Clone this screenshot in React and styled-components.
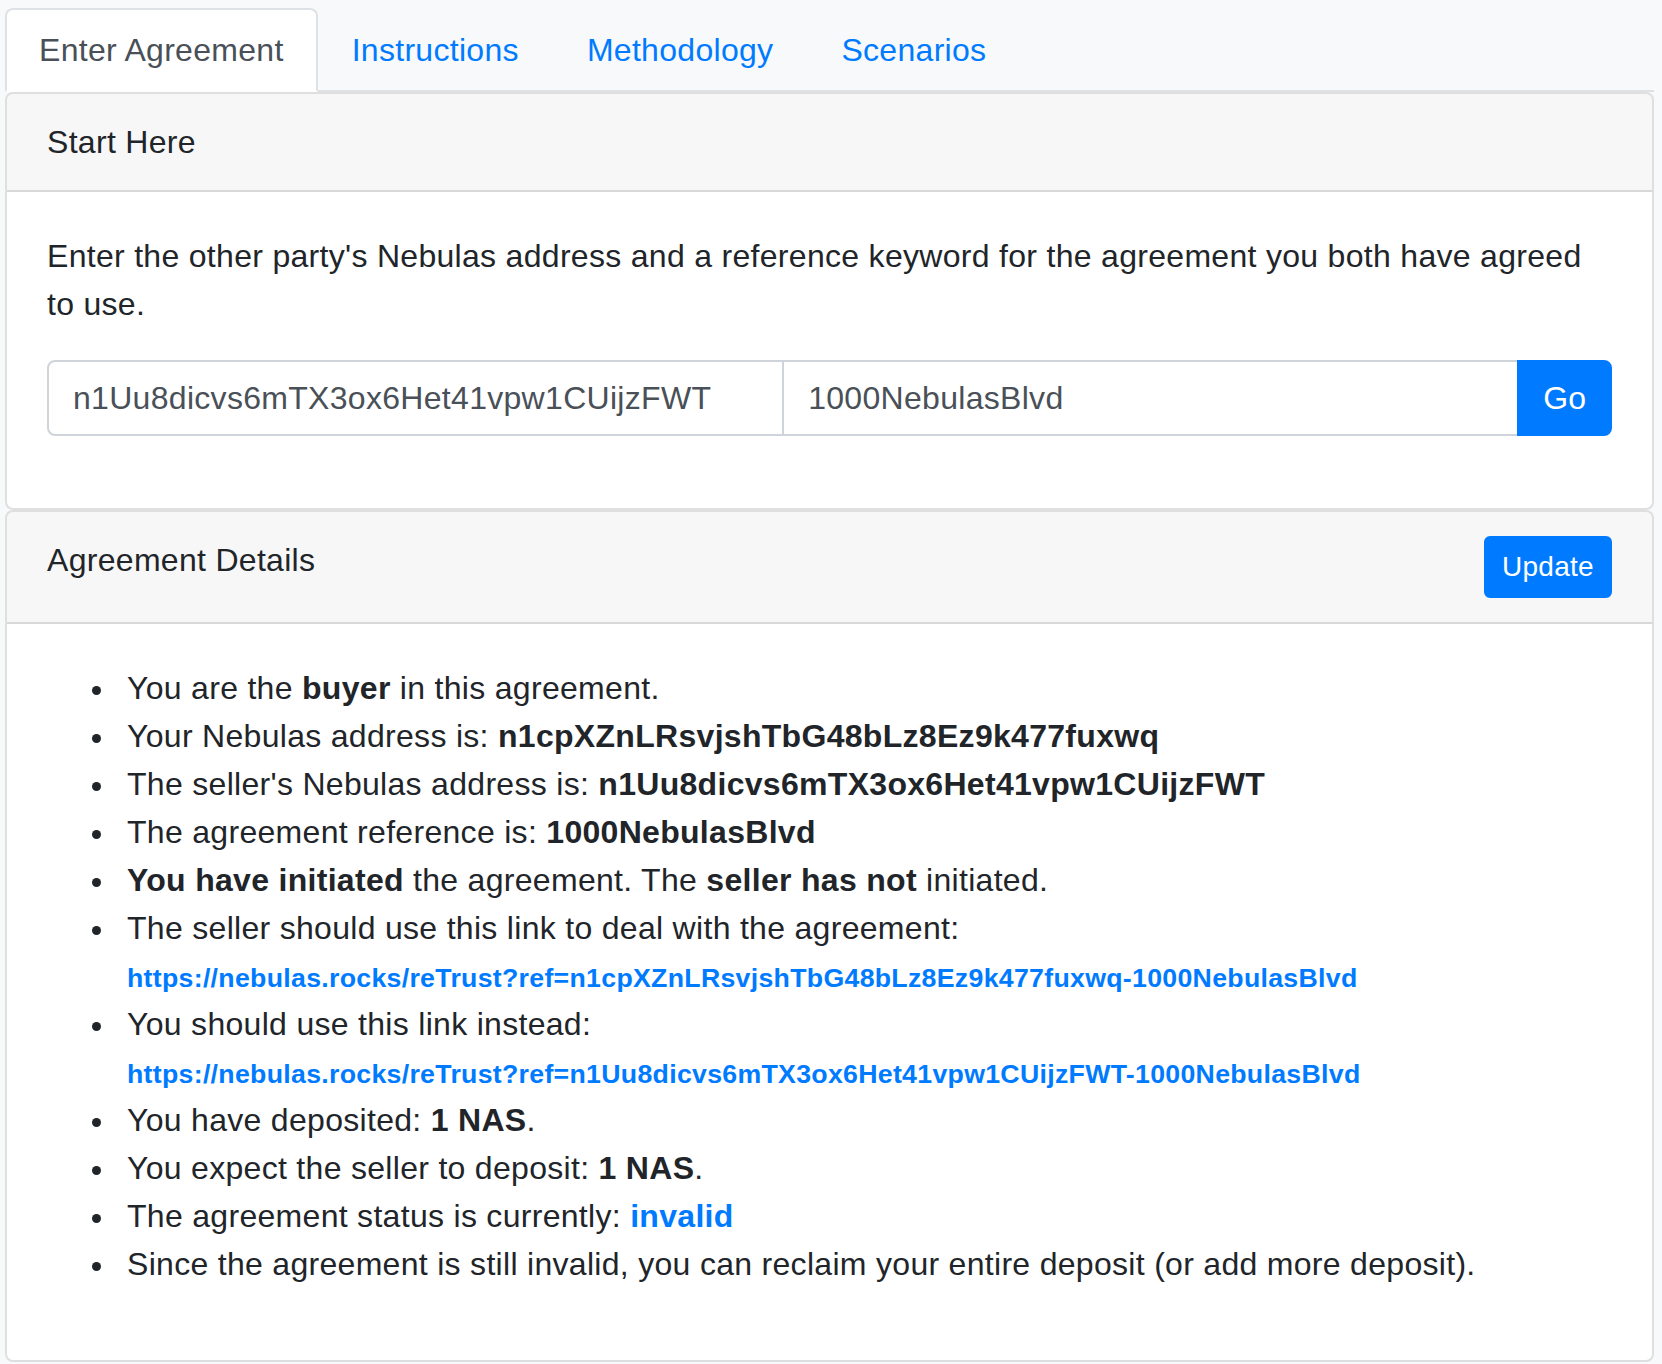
import React, { useState } from "react";
import styled, { createGlobalStyle } from "styled-components";

const GlobalStyle = createGlobalStyle`
  html, body {
    margin: 0;
    background: #f8f9fa;
  }
  * {
    box-sizing: border-box;
  }
`;

const tabs = ["Enter Agreement", "Instructions", "Methodology", "Scenarios"];

const sellerAddress = "n1Uu8dicvs6mTX3ox6Het41vpw1CUijzFWT";
const buyerAddress = "n1cpXZnLRsvjshTbG48bLz8Ez9k477fuxwq";
const reference = "1000NebulasBlvd";

function App() {
  const [active, setActive] = useState(0);
  const [address, setAddress] = useState(sellerAddress);
  const [keyword, setKeyword] = useState(reference);

  return (
    <Page>
      <GlobalStyle />
      <TabBar>
        {tabs.map((t, i) => (
          <Tab key={t} active={i === active} onClick={() => setActive(i)}>
            {t}
          </Tab>
        ))}
      </TabBar>

      <Card>
        <CardHeader>Start Here</CardHeader>
        <CardBody>
          <Lead>
            Enter the other party's Nebulas address and a reference keyword for
            the agreement you both have agreed to use.
          </Lead>
          <InputGroup>
            <Field
              value={address}
              onChange={(e) => setAddress(e.target.value)}
            />
            <Field
              value={keyword}
              onChange={(e) => setKeyword(e.target.value)}
            />
            <GoButton>Go</GoButton>
          </InputGroup>
        </CardBody>
      </Card>

      <Card>
        <CardHeader split>
          <span>Agreement Details</span>
          <SmallButton>Update</SmallButton>
        </CardHeader>
        <CardBody>
          <Details>
            <li>
              You are the <b>buyer</b> in this agreement.
            </li>
            <li>
              Your Nebulas address is: <b>{buyerAddress}</b>
            </li>
            <li>
              The seller's Nebulas address is: <b>{sellerAddress}</b>
            </li>
            <li>
              The agreement reference is: <b>{reference}</b>
            </li>
            <li>
              <b>You have initiated</b> the agreement. The{" "}
              <b>seller has not</b> initiated.
            </li>
            <li>
              The seller should use this link to deal with the agreement:
              <br />
              <LinkLine href="#">
                https://nebulas.rocks/reTrust?ref={buyerAddress}-{reference}
              </LinkLine>
            </li>
            <li>
              You should use this link instead:
              <br />
              <LinkLine href="#">
                https://nebulas.rocks/reTrust?ref={sellerAddress}-{reference}
              </LinkLine>
            </li>
            <li>
              You have deposited: <b>1 NAS</b>.
            </li>
            <li>
              You expect the seller to deposit: <b>1 NAS</b>.
            </li>
            <li>
              The agreement status is currently: <Status>invalid</Status>
            </li>
            <li>
              Since the agreement is still invalid, you can reclaim your entire
              deposit (or add more deposit).
            </li>
          </Details>
        </CardBody>
      </Card>
    </Page>
  );
}

const Page = styled.div`
  padding: 8px 8px 0 5px;
  font-family: "Liberation Sans", Arial, sans-serif;
  font-size: 32px;
  line-height: 1.5;
  letter-spacing: 0.3px;
  color: #212529;
`;

const TabBar = styled.nav`
  display: flex;
  border-bottom: 2px solid #dee2e6;
`;

const Tab = styled.div`
  padding: 16px 32px;
  margin-bottom: -2px;
  border: 2px solid transparent;
  border-radius: 8px 8px 0 0;
  cursor: pointer;
  color: ${(p) => (p.active ? "#495057" : "#007bff")};
  background: ${(p) => (p.active ? "#fff" : "transparent")};
  border-color: ${(p) =>
    p.active ? "#dee2e6 #dee2e6 #fff" : "transparent"};
`;

const Card = styled.section`
  background: #fff;
  border: 2px solid rgba(0, 0, 0, 0.125);
  border-radius: 8px;
  overflow: hidden;
`;

const CardHeader = styled.div`
  display: flex;
  justify-content: ${(p) => (p.split ? "space-between" : "flex-start")};
  align-items: flex-start;
  padding: 24px 40px;
  background: rgba(0, 0, 0, 0.03);
  border-bottom: 2px solid rgba(0, 0, 0, 0.125);
`;

const CardBody = styled.div`
  padding: 40px;
`;

const Lead = styled.p`
  margin: 0 0 32px;
`;

const InputGroup = styled.div`
  display: flex;
  margin-bottom: 32px;
`;

const Field = styled.input`
  flex: 1 1 auto;
  width: 1%;
  height: 76px;
  padding: 12px 24px;
  font-family: inherit;
  font-size: 32px;
  line-height: 1.5;
  letter-spacing: 0.3px;
  color: #495057;
  background: #fff;
  border: 2px solid #ced4da;
  border-radius: 8px 0 0 8px;
  outline: none;
  & + & {
    margin-left: -2px;
    border-radius: 0;
  }
`;

const GoButton = styled.button`
  margin-left: -2px;
  padding: 12px 24px;
  font-family: inherit;
  font-size: 32px;
  line-height: 1.5;
  color: #fff;
  background: #007bff;
  border: 2px solid #007bff;
  border-radius: 0 8px 8px 0;
  cursor: pointer;
`;

const SmallButton = styled.button`
  padding: 8px 16px;
  font-family: inherit;
  font-size: 28px;
  line-height: 1.5;
  letter-spacing: 0.3px;
  color: #fff;
  background: #007bff;
  border: 2px solid #007bff;
  border-radius: 6px;
  cursor: pointer;
`;

const Details = styled.ul`
  margin: 0 0 32px;
  padding-left: 80px;
  list-style: none;
  li::before {
    content: "";
    display: inline-block;
    width: 9px;
    height: 9px;
    margin-left: -35px;
    margin-right: 26px;
    border-radius: 50%;
    background: #212529;
    vertical-align: middle;
  }
  b {
    font-weight: 700;
  }
`;

const LinkLine = styled.a`
  font-size: 26.7px;
  font-weight: 700;
  color: #007bff;
  text-decoration: none;
`;

const Status = styled.a`
  font-weight: 700;
  color: #007bff;
`;

export default App;
